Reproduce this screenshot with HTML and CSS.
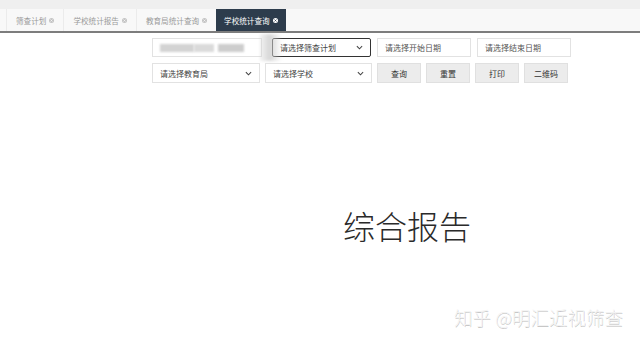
FILE: index.html
```html
<!DOCTYPE html>
<html>
  <head>
    <meta charset='utf-8' />
    <title>学校统计查询</title>
    <link rel="stylesheet" href="styles.css">
  </head>
  <body>
    <div class='topband'></div>
    <nav class='tabs'>
      <div class='tab'>筛查计划<svg class='close' viewBox='0 0 6 6'><circle cx='3' cy='3' r='3'/><path d='M1.8 1.8l2.4 2.4M4.2 1.8l-2.4 2.4'/></svg></div>
      <div class='tab'>学校统计报告<svg class='close' viewBox='0 0 6 6'><circle cx='3' cy='3' r='3'/><path d='M1.8 1.8l2.4 2.4M4.2 1.8l-2.4 2.4'/></svg></div>
      <div class='tab'>教育局统计查询<svg class='close' viewBox='0 0 6 6'><circle cx='3' cy='3' r='3'/><path d='M1.8 1.8l2.4 2.4M4.2 1.8l-2.4 2.4'/></svg></div>
      <div class='tab active'>学校统计查询<svg class='close' viewBox='0 0 6 6'><circle cx='3' cy='3' r='3'/><path d='M1.8 1.8l2.4 2.4M4.2 1.8l-2.4 2.4'/></svg></div>
    </nav>
    <main>
      <div class='filters'>
        <div class='row'>
          <div class='field blurred'>
            <span class='blot b1'></span>
            <span class='blot b2'></span>
            <span class='blot b3'></span>
          </div>
          <div class='select focus'>请选择筛查计划<svg class='chev' viewBox='0 0 8 5'><path d='M1 1l3 3 3-3'/></svg></div>
          <div class='field date'>请选择开始日期</div>
          <div class='field date'>请选择结束日期</div>
          <div class='smear'></div>
        </div>
        <div class='row second'>
          <div class='select'>请选择教育局<svg class='chev' viewBox='0 0 8 5'><path d='M1 1l3 3 3-3'/></svg></div>
          <div class='select'>请选择学校<svg class='chev' viewBox='0 0 8 5'><path d='M1 1l3 3 3-3'/></svg></div>
          <button>查询</button>
          <button>重置</button>
          <button>打印</button>
          <button>二维码</button>
        </div>
      </div>
      <section class='report'>
        <h1>综合报告</h1>
      </section>
    </main>
    <div class='watermark'>知乎 @明汇近视筛查</div>
  </body>
</html>
```

FILE: styles.css
```css
* {
  box-sizing: border-box;
}
body, html {
  margin: 0;
  padding: 0;
  width: 640px;
  height: 343px;
  overflow: hidden;
}
body {
  background: #fff;
  font-family: "Noto Sans CJK SC", "Liberation Sans", sans-serif;
  position: relative;
}
.topband {
  height: 9px;
  background: #efefef;
}
.tabs {
  display: flex;
  height: 24px;
  padding-left: 6px;
  background: #f8f8f8;
  border-bottom: 2px solid #7d7d7d;
}
.tab {
  display: flex;
  align-items: center;
  gap: 3px;
  padding: 0 9px;
  font-size: 7.6px;
  color: #9a9a9a;
  border-left: 1px solid #ebebeb;
}
.tab .close {
  width: 5px;
  height: 5px;
}
.tab .close circle {
  fill: #c4c4c4;
}
.tab .close path {
  stroke: #f8f8f8;
  stroke-width: 0.9;
}
.tab.active {
  background: #2d3c4c;
  color: #fff;
  border-left: none;
  padding: 0 8px;
}
.tab.active .close circle {
  fill: #fff;
}
.tab.active .close path {
  stroke: #2d3c4c;
}
.filters {
  margin-left: 152px;
  padding-top: 5px;
  display: flex;
  flex-direction: column;
  gap: 6px;
}
.row {
  display: flex;
  gap: 6px;
  position: relative;
}
.row.second {
  gap: 5px;
}
.field, .select, button {
  height: 19px;
  border: 1px solid #e2e2e2;
  background: #fff;
  font-family: inherit;
  font-size: 8px;
  display: flex;
  align-items: center;
  padding: 0 7px;
}
.blurred {
  width: 110px;
}
.blot {
  height: 8px;
  background: #cfcfcf;
  filter: blur(1px);
}
.b1 {
  width: 34px;
  background: #d3d3d3;
}
.b2 {
  width: 20px;
  background: #dadada;
}
.b3 {
  width: 26px;
  margin-left: 4px;
  background: #cdcdcd;
}
.date {
  width: 94px;
  color: #555;
}
.select {
  width: 108px;
  color: #444;
  justify-content: space-between;
}
.select.focus {
  width: 99px;
  margin-left: 4px;
  border-color: #333;
  border-radius: 2px;
}
.chev {
  width: 7px;
  height: 5px;
}
.chev path {
  fill: none;
  stroke: #444;
  stroke-width: 1.2;
}
.smear {
  position: absolute;
  left: 108px;
  top: -4px;
  width: 22px;
  height: 27px;
  background: linear-gradient(to right, rgba(215, 215, 215, 0.3), rgba(200, 200, 200, 0.75) 45%, rgba(225, 225, 225, 0));
  filter: blur(1.5px);
}
.second .select {
  height: 20px;
}
.second .select + .select {
  width: 107px;
}
button {
  width: 44px;
  height: 20px;
  padding: 0;
  justify-content: center;
  background: #ececec;
  border-color: #e0e0e0;
  color: #333;
}
.report {
  margin-top: 122px;
  padding-left: 174px;
  display: flex;
  justify-content: center;
}
h1 {
  margin: 0;
  font-size: 32px;
  line-height: 40px;
  font-weight: 300;
  color: #2a2a2a;
}
.watermark {
  position: absolute;
  top: 306px;
  right: 17px;
  font-size: 18.5px;
  line-height: 22px;
  font-weight: 300;
  color: #f3f3f3;
  text-shadow: 0.5px 0.5px 0.5px rgba(0, 0, 0, 0.22);
}
```
